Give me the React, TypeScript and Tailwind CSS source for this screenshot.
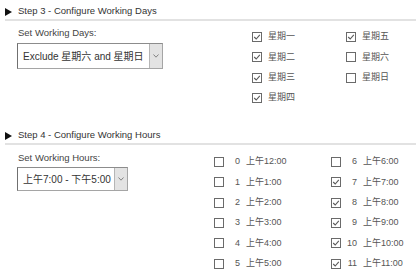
import React from 'react';

const days: [string, boolean][] = [
  ['星期一', true],
  ['星期二', true],
  ['星期三', true],
  ['星期四', true],
  ['星期五', true],
  ['星期六', false],
  ['星期日', false],
];

const hours = Array.from({ length: 12 }, (_, i) => ({
  n: i,
  label: `上午${i === 0 ? 12 : i}:00`,
  checked: i >= 7,
}));

const Box = ({ checked }: { checked: boolean }) => (
  <svg width="10" height="10" viewBox="0 0 10 10" className="shrink-0">
    <rect x="0.5" y="0.5" width="9" height="9" fill="#fff" stroke="#6a6a6a" />
    {checked && <polyline points="2.2,5 4.2,7 7.8,2.8" fill="none" stroke="#5a5a5a" strokeWidth="1.1" />}
  </svg>
);

const Header = ({ title }: { title: string }) => (
  <div className="ml-[5px] h-[17px] flex items-center gap-[6px] border-b-2 border-[#e2e2e2] text-[9.5px] text-[#333]">
    <svg width="7" height="8" viewBox="0 0 7 8" className="shrink-0">
      <polygon points="0,0 7,4 0,8" fill="#111" />
    </svg>
    <span>{title}</span>
  </div>
);

const Select = ({ text, w, h }: { text: string; w: string; h: string }) => (
  <div className={`${w} ${h} flex border border-[#a5a5a5] border-l-[#707070] border-t-[#8c8c8c] bg-white`}>
    <div className="flex-1 flex items-center pl-[5px] text-[10px] text-[#333] whitespace-nowrap">{text}</div>
    <div className="w-[13px] flex items-center justify-center bg-[#e3e3e3] border-l border-[#b5b5b5]">
      <svg width="6" height="4" viewBox="0 0 6 4">
        <polyline points="0.5,0.5 3,3.2 5.5,0.5" fill="none" stroke="#777" strokeWidth="0.9" />
      </svg>
    </div>
  </div>
);

export default function App() {
  return (
    <div className="w-[416px] h-[273px] bg-white pt-[4px] font-['Liberation_Sans','Noto_Sans_CJK_SC',sans-serif] text-[#555] overflow-hidden">
      <Header title="Step 3 - Configure Working Days" />
      <div className="h-[107px] flex items-start">
        <div className="w-[252px] shrink-0 pl-[17px] pt-[6px]">
          <div className="pl-[1px] h-[12px] leading-[12px] text-[9.5px] text-[#444]">Set Working Days:</div>
          <div className="mt-[4px]">
            <Select text="Exclude 星期六 and 星期日" w="w-[146px]" h="h-[26px]" />
          </div>
        </div>
        <div className="pt-[6px] grid grid-rows-4 grid-flow-col grid-cols-[94px_60px]">
          {days.map(([d, c]) => (
            <div key={d} className="h-[20.3px] flex items-center gap-[6px] text-[9px]">
              <Box checked={c} />
              <span>{d}</span>
            </div>
          ))}
        </div>
      </div>
      <Header title="Step 4 - Configure Working Hours" />
      <div className="flex items-start">
        <div className="w-[214px] shrink-0 pl-[17px] pt-[7px]">
          <div className="pl-[1px] h-[12px] leading-[12px] text-[9.5px] text-[#444]">Set Working Hours:</div>
          <div className="mt-[3px]">
            <Select text="上午7:00 - 下午5:00" w="w-[111px]" h="h-[24px]" />
          </div>
        </div>
        <div className="pt-[7px] grid grid-rows-6 grid-flow-col grid-cols-[117px_80px]">
          {hours.map((h) => (
            <div key={h.n} className="h-[20.3px] flex items-center text-[9px]">
              <Box checked={h.checked} />
              <span className="w-[16px] text-right">{h.n}</span>
              <span className="ml-[6px] whitespace-nowrap">{h.label}</span>
            </div>
          ))}
        </div>
      </div>
    </div>
  );
}
